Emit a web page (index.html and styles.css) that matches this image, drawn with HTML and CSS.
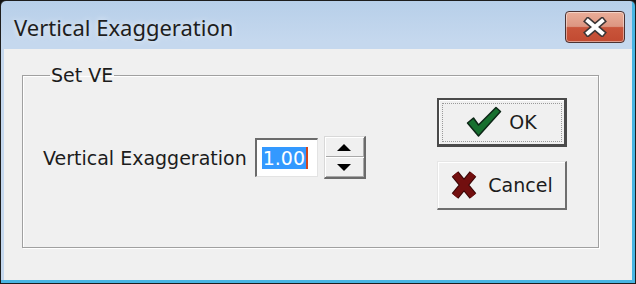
FILE: index.html
```html
<!DOCTYPE html>
<html lang="en">
    <head>
        <meta charset="UTF-8">
        <title>Vertical Exaggeration</title>
        <link rel="stylesheet" href="styles.css">
    </head>

    <body>

        <div class="window">

            <!-- Заголовок окна -->

            <div class="titlebar">
                <span class="title">Vertical Exaggeration</span>
                <div class="close-btn">
                    <svg width="24" height="20" viewBox="0 0 24 20">
                        <path d="M5 4 L19 16 M19 4 L5 16" stroke="#3b3535" stroke-width="7" stroke-linecap="square"/>
                        <path d="M5 4 L19 16 M19 4 L5 16" stroke="#ffffff" stroke-width="4" stroke-linecap="square"/>
                    </svg>
                </div>
            </div>

            <!-- Содержимое -->

            <div class="client">
                <fieldset class="group">
                    <legend>Set VE</legend>

                    <div class="ve-row">
                        <span class="label">Vertical Exaggeration</span>
                        <div class="edit">
                            <span class="selected">1.00</span>
                        </div>
                        <div class="spinner">
                            <div class="spin-part"><span class="arrow-up"></span></div>
                            <div class="spin-part"><span class="arrow-down"></span></div>
                        </div>
                    </div>

                    <div class="buttons">
                        <div class="btn btn-default">
                            <svg width="36" height="32" viewBox="0 0 36 32">
                                <path d="M1.5 17 L7.5 12 L12.5 19 L30 1.5 L34.5 5.5 L12.5 30 Z" fill="#17702f" stroke="#0c2616" stroke-width="1.5" stroke-linejoin="round"/>
                            </svg>
                            <span>OK</span>
                        </div>
                        <div class="btn">
                            <svg width="28" height="30" viewBox="0 0 28 30">
                                <path d="M5 4 L23 26 M23 4 L5 26" stroke="#3a0606" stroke-width="8.5"/>
                                <path d="M5 4 L23 26 M23 4 L5 26" stroke="#720f0f" stroke-width="6.5"/>
                            </svg>
                            <span>Cancel</span>
                        </div>
                    </div>
                </fieldset>
            </div>

        </div>

    </body>

</html>
```

FILE: styles.css
```css
* {
    box-sizing: border-box;
}

body {
    margin: 0;
    background: #111;
    font-family: "DejaVu Sans", sans-serif;
    font-size: 19px;
    color: #1c1c1c;
}

/* Окно */

.window {
    width: 636px;
    height: 284px;
    display: flex;
    flex-direction: column;
    border: 1px solid #1d1d1d;
    border-radius: 6px 6px 0 0;
    padding: 0 3px 3px 3px;
    background: linear-gradient(#b7cfe9, #c5d8ee 40px);
    box-shadow: inset -3px -3px 0 #48b5e3;
}

/* Заголовок */

.titlebar {
    height: 48px;
    display: flex;
    justify-content: space-between;
    align-items: flex-start;
    padding: 10px 7px 0 10px;
}

.title {
    font-family: "Noto Sans", sans-serif;
    font-size: 22px;
    line-height: 32px;
    color: #1e1e1e;
    text-shadow: 0 0 6px rgba(255, 255, 255, 0.8);
}

.close-btn {
    width: 60px;
    height: 32px;
    display: flex;
    justify-content: center;
    align-items: center;
    border: 1px solid #4b3232;
    border-radius: 4px;
    background: linear-gradient(#eaae98 0%, #dc9682 48%, #c9553b 52%, #c24a31 100%);
    box-shadow: inset 0 0 0 1px rgba(255, 255, 255, 0.45);
}

/* Клиентская область */

.client {
    flex: 1;
    display: flex;
    background: #f0f0f0;
    padding: 15px 33px 32px 18px;
}

.group {
    flex: 1;
    margin: 0;
    min-width: 0;
    display: flex;
    justify-content: space-between;
    align-items: flex-start;
    padding: 11px 31px 0 20px;
    border: 1px solid #a0a0a0;
    box-shadow: inset 1px 1px 0 #fff, 1px 1px 0 #fff;
}

.group legend {
    padding: 0 1px;
    margin-left: 7px;
    line-height: 23px;
}

/* Поле ввода */

.ve-row {
    display: flex;
    align-items: center;
    margin-top: 38px;
}

.label {
    margin-right: 8px;
}

.edit {
    width: 63px;
    height: 39px;
    display: flex;
    align-items: center;
    padding-left: 5px;
    background: #fff;
    border-top: 2px solid #6b6b6b;
    border-left: 2px solid #6b6b6b;
    border-right: 1px solid #e3e3e3;
    border-bottom: 1px solid #e3e3e3;
    margin-right: 6px;
}

.selected {
    background: #3399ff;
    color: #fff;
    line-height: 22px;
    padding: 0 1px 0 1px;
    border-right: 2px solid #d2461e;
}

.spinner {
    width: 42px;
    height: 43px;
    display: flex;
    flex-direction: column;
    border: 1px solid #d8d8d8;
    border-right: 2px solid #6b6b6b;
    border-bottom: 2px solid #6b6b6b;
}

.spin-part {
    flex: 1;
    display: flex;
    justify-content: center;
    align-items: center;
    box-shadow: inset 1px 1px 0 #fff, inset -1px -1px 0 #a8a8a8;
}

.arrow-up {
    border-left: 7px solid transparent;
    border-right: 7px solid transparent;
    border-bottom: 7px solid #000;
}

.arrow-down {
    border-left: 7px solid transparent;
    border-right: 7px solid transparent;
    border-top: 7px solid #000;
}

/* Кнопки */

.buttons {
    display: flex;
    flex-direction: column;
    gap: 14px;
}

.btn {
    width: 130px;
    height: 49px;
    display: flex;
    justify-content: center;
    align-items: center;
    gap: 10px;
    border-top: 1px solid #e6e6e6;
    border-left: 1px solid #e6e6e6;
    border-right: 2px solid #6e6e6e;
    border-bottom: 2px solid #6e6e6e;
    box-shadow: inset 1px 1px 0 #fff;
}

.btn-default {
    gap: 7px;
    border: 2px solid #4a4a4a;
    border-right-width: 3px;
    border-bottom-width: 3px;
    outline: 1px dotted #9a9a9a;
    outline-offset: -6px;
}
```
